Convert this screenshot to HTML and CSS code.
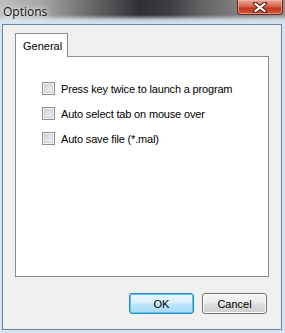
FILE: index.html
```html
<!DOCTYPE html>
<html>
<head>
<meta charset="utf-8">
<link rel="stylesheet" href="styles.css">
</head>
<body>
<div class="window">
  <div class="titlebar">
    <span class="title">Options</span>
    <div class="close">
      <svg width="14" height="11" viewBox="0 0 14 11">
        <path d="M2 1.5 L12 9.5 M12 1.5 L2 9.5" stroke="#5a1a10" stroke-width="4" stroke-linecap="square"/>
        <path d="M2.5 2 L11.5 9 M11.5 2 L2.5 9" stroke="#ffffff" stroke-width="2.2" stroke-linecap="square"/>
      </svg>
    </div>
  </div>
  <div class="client">
    <div class="tabs">
      <div class="tab">General</div>
    </div>
    <div class="pane">
      <label class="check"><span class="box"></span><span>Press key twice to launch a program</span></label>
      <label class="check"><span class="box"></span><span>Auto select tab on mouse over</span></label>
      <label class="check"><span class="box"></span><span>Auto save file (*.mal)</span></label>
    </div>
    <div class="buttons">
      <button class="btn default">OK</button>
      <button class="btn">Cancel</button>
    </div>
  </div>
</div>
</body>
</html>
```

FILE: styles.css
```css
html, body {
  margin: 0;
  padding: 0;
}
body {
  width: 285px;
  height: 333px;
  overflow: hidden;
  background: #c9daec;
  font-family: "Liberation Sans", Arial, sans-serif;
  font-size: 11px;
  color: #000;
}
.window {
  display: flex;
  flex-direction: column;
  width: 285px;
  height: 333px;
  background:
    linear-gradient(to bottom, rgba(255,255,255,0) 0px, rgba(255,255,255,0) 15px, rgba(220,232,244,0.85) 20px, #d6e3f1 24px, #d6e3f1 100%),
    linear-gradient(to right, #bdbdbd 0px, #a8a8a8 40px, #6a6a6a 90px, #2e3034 140px, #3c3e42 170px, #626264 200px, #7e7e7e 235px, #909090 285px);
}
.titlebar {
  height: 24px;
  flex: none;
  display: flex;
  justify-content: space-between;
  align-items: flex-start;
}
.title {
  font-family: "Open Sans", "Liberation Sans", sans-serif;
  font-size: 12px;
  color: #111;
  margin: 3px 0 0 3px;
  text-shadow: 0 0 6px rgba(255,255,255,0.9), 0 0 3px rgba(255,255,255,0.9);
}
.close {
  width: 46px;
  height: 15px;
  margin-right: 2px;
  box-sizing: border-box;
  border: 1px solid #6b2a22;
  border-top: none;
  border-radius: 0 0 4px 4px;
  background: linear-gradient(to bottom, #e8a595 0%, #d8705a 40%, #c0391f 60%, #d2583a 100%);
  box-shadow: inset 0 0 0 1px rgba(255,200,190,0.5);
  display: flex;
  align-items: center;
  justify-content: center;
}
.client {
  margin: 0 3px 3px 2px;
  flex: 1;
  background: #f0f0f0;
  border: 1px solid #6e8196;
  display: flex;
  flex-direction: column;
  padding: 8px 0 0 12px;
}
.tabs {
  display: flex;
  position: relative;
  z-index: 1;
}
.tab {
  width: 53px;
  height: 24px;
  box-sizing: border-box;
  border: 1px solid #898c95;
  border-bottom: none;
  background: #fff;
  padding: 6px 0 0 7px;
  margin-bottom: -1px;
}
.pane {
  width: 254px;
  height: 221px;
  box-sizing: border-box;
  border: 1px solid #898c95;
  background: #fff;
  padding: 25px 0 0 26px;
  display: flex;
  flex-direction: column;
  gap: 12px;
}
.check {
  display: flex;
  align-items: center;
  gap: 6px;
  height: 13px;
  letter-spacing: -0.17px;
}
.box {
  width: 13px;
  height: 13px;
  box-sizing: border-box;
  border: 1px solid #8e8f8f;
  background: linear-gradient(135deg, #c9ccd1 0%, #e6e7e9 60%, #f6f6f6 100%);
  box-shadow: inset 0 0 0 1px #f4f4f4, inset 0 0 0 2px #d0d2d6;
}
.buttons {
  display: flex;
  justify-content: flex-end;
  gap: 8px;
  margin: 16px 14px 0 0;
}
.btn {
  font-family: "Liberation Sans", Arial, sans-serif;
  font-size: 11px;
  width: 65px;
  height: 21px;
  padding: 0;
  border: 1px solid #707070;
  border-radius: 3px;
  background: linear-gradient(to bottom, #f6f6f6 0%, #ebebeb 48%, #dddddd 52%, #cfcfcf 100%);
  box-shadow: inset 0 0 0 1px #fcfcfc;
  color: #000;
}
.btn.default {
  border-color: #3c7fb1;
  background: linear-gradient(to bottom, #eaf6fd 0%, #d9f0fc 48%, #bee6fd 52%, #a7d9f5 100%);
  box-shadow: inset 0 0 0 1px #48d0f8;
}
```
